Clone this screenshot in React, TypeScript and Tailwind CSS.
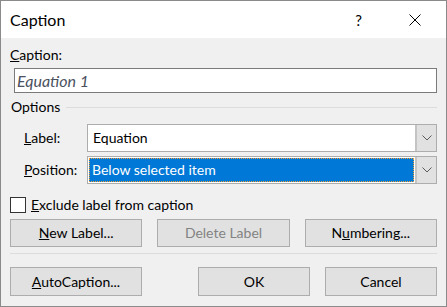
import type { ReactNode } from 'react';

const FONT = "font-['Lato',sans-serif]";

// Windows-style push button
function DlgButton({ children, disabled, className = '' }: { children: ReactNode; disabled?: boolean; className?: string }) {
	return (
		<div
			className={`flex items-center justify-center border border-[#adadad] bg-[#e1e1e1] text-[14px] ${
				disabled ? 'text-[#838383]' : 'text-black'
			} ${className}`}
		>
			{children}
		</div>
	);
}

function Chevron() {
	return (
		<svg width="10" height="6" viewBox="0 0 10 6" className="text-[#5a5a5a]">
			<path d="M0.5 0.5 L5 5 L9.5 0.5" fill="none" stroke="currentColor" strokeWidth="1" />
		</svg>
	);
}

function Combo({ value, selected }: { value: string; selected?: boolean }) {
	return (
		<div className="flex h-[28px] flex-1 border border-[#adadad] bg-white">
			<div className="flex flex-1 items-center p-[1px]">
				{selected ? (
					<div className="flex h-full w-full items-center bg-[#0078d7] pl-[3px] text-white outline-1 outline-dotted outline-[#f0a030] -outline-offset-1">
						{value}
					</div>
				) : (
					<span className="pl-[4px]">{value}</span>
				)}
			</div>
			<div className="flex w-[21px] items-center justify-center border-l-2 border-[#c4c4c4] bg-[#e1e1e1]">
				<Chevron />
			</div>
		</div>
	);
}

export default function App() {
	return (
		<div className={`${FONT} flex h-[307px] w-[447px] flex-col border border-[#8a8a8a] bg-[#f0f0f0] text-[14px] leading-[20px] text-black`}>
			{/* Title bar */}
			<div className="flex h-[37px] shrink-0 items-center bg-white">
				<span className="pl-[9px] text-[16px]">Caption</span>
				<span className="ml-auto mr-[47px] text-[15px]">?</span>
				<svg width="12" height="12" viewBox="0 0 12 12" className="mr-[25px]">
					<path d="M0.5 0.5 L11.5 11.5 M11.5 0.5 L0.5 11.5" stroke="#000" strokeWidth="1" />
				</svg>
			</div>

			<div className="flex flex-1 flex-col px-[9px]">
				<div className="mt-[7px] h-[20px]">
					<u>C</u>aption:
				</div>
				<div className="ml-[4px] mt-[3px] flex h-[25px] items-center border border-[#7a7a7a] bg-white pl-[2px] text-[16px] italic text-[#4a5160]">
					Equation 1
				</div>

				{/* Options group */}
				<div className="mt-[4px] flex h-[20px] items-center">
					<span className="pl-[1px]">Options</span>
					<div className="ml-[6px] h-px flex-1 bg-[#dcdcdc]" />
				</div>
				<div className="mt-[7px] flex items-center">
					<span className="w-[77px] shrink-0 pl-[14px]">
						<u>L</u>abel:
					</span>
					<Combo value="Equation" />
				</div>
				<div className="mt-[4px] flex items-center">
					<span className="w-[77px] shrink-0 pl-[14px]">
						<u>P</u>osition:
					</span>
					<Combo value="Below selected item" selected />
				</div>

				<div className="mt-[13px] flex h-[16px] items-center">
					<div className="h-[16px] w-[16px] border border-[#333] bg-white" />
					<span className="ml-[5px]">
						<u>E</u>xclude label from caption
					</span>
				</div>

				<div className="mt-[6px] grid grid-cols-3 gap-[15px]">
					<DlgButton className="h-[28px]">
						<span>
							<u>N</u>ew Label...
						</span>
					</DlgButton>
					<DlgButton className="h-[28px]" disabled>
						Delete Label
					</DlgButton>
					<DlgButton className="h-[28px]">
						<span>
							N<u>u</u>mbering...
						</span>
					</DlgButton>
				</div>

				<div className="mt-[6px] h-px bg-[#dcdcdc]" />

				<div className="mt-[13px] flex">
					<DlgButton className="h-[29px] w-[132px]">
						<span>
							<u>A</u>utoCaption...
						</span>
					</DlgButton>
					<DlgButton className="ml-auto h-[29px] w-[112px]">OK</DlgButton>
					<DlgButton className="ml-[15px] h-[29px] w-[112px]">Cancel</DlgButton>
				</div>
			</div>
		</div>
	);
}
